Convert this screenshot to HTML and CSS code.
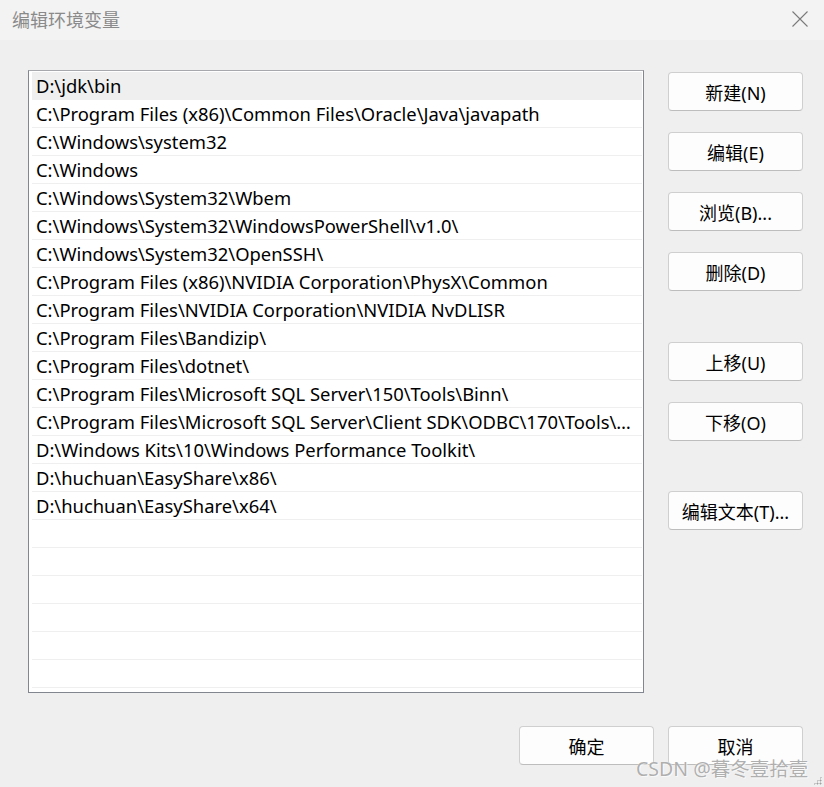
FILE: index.html
```html
<!DOCTYPE html>
<html lang="zh-CN">
<head>
<meta charset="utf-8">
<title>编辑环境变量</title>
<link rel="stylesheet" href="styles.css">
</head>
<body>
<div class="dialog">
  <div class="titlebar">
    <span class="title">编辑环境变量</span>
    <svg class="close" width="16" height="16" viewBox="0 0 16 16"><path d="M0.5 0.5 L15.5 15.5 M15.5 0.5 L0.5 15.5" stroke="#7a7a7a" stroke-width="1.1" fill="none"/></svg>
  </div>
  <div class="content">
    <div class="main">
      <div class="list">
        <div class="row selected">D:\jdk\bin</div>
        <div class="row">C:\Program Files (x86)\Common Files\Oracle\Java\javapath</div>
        <div class="row">C:\Windows\system32</div>
        <div class="row">C:\Windows</div>
        <div class="row">C:\Windows\System32\Wbem</div>
        <div class="row">C:\Windows\System32\WindowsPowerShell\v1.0\</div>
        <div class="row">C:\Windows\System32\OpenSSH\</div>
        <div class="row">C:\Program Files (x86)\NVIDIA Corporation\PhysX\Common</div>
        <div class="row">C:\Program Files\NVIDIA Corporation\NVIDIA NvDLISR</div>
        <div class="row">C:\Program Files\Bandizip\</div>
        <div class="row">C:\Program Files\dotnet\</div>
        <div class="row">C:\Program Files\Microsoft SQL Server\150\Tools\Binn\</div>
        <div class="row">C:\Program Files\Microsoft SQL Server\Client SDK\ODBC\170\Tools\Binn\</div>
        <div class="row">D:\Windows Kits\10\Windows Performance Toolkit\</div>
        <div class="row">D:\huchuan\EasyShare\x86\</div>
        <div class="row">D:\huchuan\EasyShare\x64\</div>
        <div class="row"></div>
        <div class="row"></div>
        <div class="row"></div>
        <div class="row"></div>
        <div class="row"></div>
        <div class="row"></div>
      </div>
      <div class="side">
        <div class="group">
          <button class="btn">新建(N)</button>
          <button class="btn">编辑(E)</button>
          <button class="btn">浏览(B)...</button>
          <button class="btn">删除(D)</button>
        </div>
        <div class="group g2">
          <button class="btn">上移(U)</button>
          <button class="btn">下移(O)</button>
        </div>
        <div class="group g3">
          <button class="btn">编辑文本(T)...</button>
        </div>
      </div>
    </div>
    <div class="footer">
      <button class="btn">确定</button>
      <button class="btn">取消</button>
    </div>
  </div>
  <div class="watermark">CSDN @暮冬壹拾壹</div>
  <div class="grip"></div>
</div>
</body>
</html>
```

FILE: styles.css
```css
html, body {
  margin: 0;
  padding: 0;
}
body {
  background: #efefef;
  font-family: "Noto Sans", "Noto Sans CJK SC", sans-serif;
}
.dialog {
  position: relative;
  width: 824px;
  height: 787px;
  background: #efefef;
  overflow: hidden;
}
.titlebar {
  height: 40px;
  background: #f3f3f3;
  display: flex;
  align-items: center;
  justify-content: space-between;
  padding: 0 16px 0 12px;
}
.title {
  font-family: "Noto Sans CJK SC", sans-serif;
  font-size: 18px;
  color: #8a8a8a;
  margin-top: -2px;
}
.close {
  display: block;
  margin-top: -3px;
}
.content {
  padding: 30px 21px 0 28px;
}
.main {
  display: flex;
  gap: 24px;
}
.list {
  width: 611px;
  height: 620px;
  border: 1px solid #82868e;
  border-top-color: #a6a8ad;
  background: #fff;
  padding: 1px 1px 0 2px;
  box-sizing: content-box;
  overflow: hidden;
}
.row {
  height: 27px;
  line-height: 28px;
  border-bottom: 1px solid #efefef;
  padding-left: 4px;
  font-size: 18.4px;
  color: #000;
  white-space: nowrap;
  overflow: hidden;
  text-overflow: ellipsis;
  padding-right: 8px;
  margin-left: 1px;
}
.row.selected {
  background: #efefef;
}
.side {
  display: flex;
  flex-direction: column;
  padding-top: 2px;
}
.group {
  display: flex;
  flex-direction: column;
  gap: 21px;
}
.g2 {
  margin-top: 51px;
}
.g3 {
  margin-top: 50px;
}
.btn {
  width: 135px;
  height: 39px;
  background: #fdfdfd;
  border: 1px solid #cfcfcf;
  border-bottom-color: #bdbdbd;
  border-radius: 4px;
  font-family: "Noto Sans", "Noto Sans CJK SC", sans-serif;
  font-size: 18px;
  color: #000;
  padding: 0;
  margin: 0;
}
.footer {
  display: flex;
  justify-content: flex-end;
  gap: 14px;
  margin-top: 33px;
}
.watermark {
  position: absolute;
  left: 636px;
  top: 753px;
  font-family: "Noto Sans", "Noto Sans CJK SC", sans-serif;
  font-size: 19.5px;
  color: rgba(140, 140, 140, 0.7);
  text-shadow: 0 0 1px #fff, 1px 1px 0 rgba(255,255,255,0.6);
  white-space: nowrap;
}
.grip {
  position: absolute;
  right: 2px;
  bottom: 2px;
  width: 9px;
  height: 9px;
  background-image: radial-gradient(circle, #a0a0a0 0.9px, transparent 1.1px);
  background-size: 3px 3px;
  clip-path: polygon(100% 0, 100% 100%, 0 100%);
}
```
